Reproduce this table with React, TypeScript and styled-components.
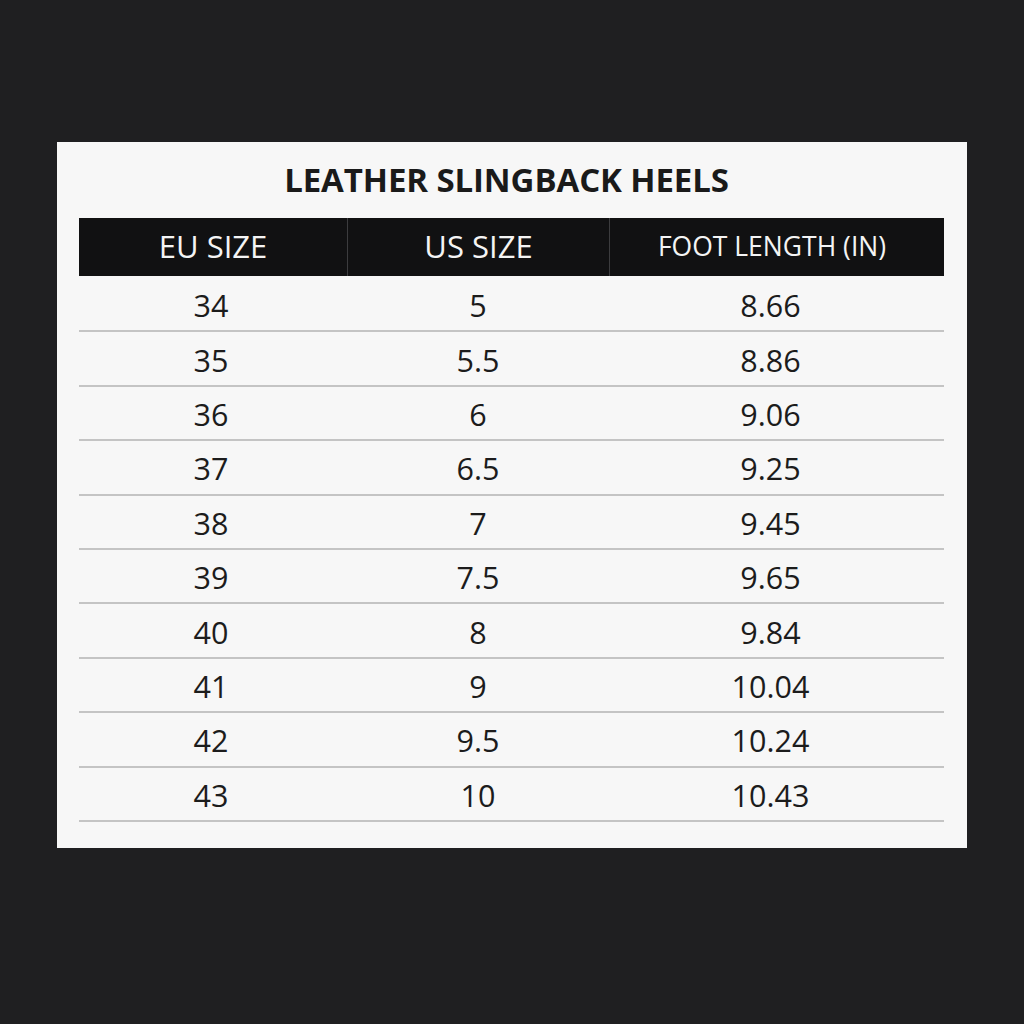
import styled, { createGlobalStyle } from "styled-components";

type SizeRow = {
  eu: string;
  us: string;
  foot: string;
};

const ROWS: SizeRow[] = [
  { eu: "34", us: "5", foot: "8.66" },
  { eu: "35", us: "5.5", foot: "8.86" },
  { eu: "36", us: "6", foot: "9.06" },
  { eu: "37", us: "6.5", foot: "9.25" },
  { eu: "38", us: "7", foot: "9.45" },
  { eu: "39", us: "7.5", foot: "9.65" },
  { eu: "40", us: "8", foot: "9.84" },
  { eu: "41", us: "9", foot: "10.04" },
  { eu: "42", us: "9.5", foot: "10.24" },
  { eu: "43", us: "10", foot: "10.43" },
];

const GRID_COLUMNS = "268px 262px 1fr";

const GlobalStyle = createGlobalStyle({
  "html, body": {
    margin: 0,
    padding: 0,
    background: "#1f1f21",
  },
  body: {
    fontFamily: '"Open Sans", "Liberation Sans", sans-serif',
  },
});

const Page = styled.div({
  minHeight: "1024px",
  padding: "142px 0 0 57px",
  boxSizing: "border-box",
});

const Card = styled.div({
  width: "910px",
  height: "706px",
  boxSizing: "border-box",
  padding: "0 23px 0 22px",
  background: "#f7f7f7",
});

const Title = styled.h1({
  margin: 0,
  height: "76px",
  lineHeight: "76px",
  textAlign: "center",
  fontSize: "33px",
  fontWeight: 700,
  color: "#1a1a1a",
  letterSpacing: "-0.1px",
  paddingRight: "10px",
});

const HeaderRow = styled.div({
  display: "grid",
  gridTemplateColumns: GRID_COLUMNS,
  height: "58px",
  background: "#111112",
});

type HeaderCellProps = {
  $small?: boolean;
  $divider?: boolean;
};

const HeaderCell = styled.div<HeaderCellProps>(({ $small, $divider }) => ({
  display: "flex",
  alignItems: "center",
  justifyContent: "center",
  color: "#f4f4f4",
  fontSize: $small ? "26.5px" : "31px",
  paddingBottom: "2px",
  paddingRight: $small ? "10px" : "0",
  borderLeft: $divider ? "1px solid #3c3c3e" : "none",
}));

const TableBody = styled.div({
  paddingTop: "2px",
});

const BodyRow = styled.div({
  display: "grid",
  gridTemplateColumns: GRID_COLUMNS,
  height: "54.4px",
  boxSizing: "border-box",
  borderBottom: "2px solid #c4c4c4",
});

type BodyCellProps = {
  $shift?: number;
};

const BodyCell = styled.div<BodyCellProps>(({ $shift = 0 }) => ({
  display: "flex",
  alignItems: "center",
  justifyContent: "center",
  fontSize: "30.5px",
  color: "#1c1c1c",
  paddingTop: "2px",
  paddingRight: `${$shift}px`,
}));

export default function App() {
  return (
    <>
      <GlobalStyle />
      <Page>
        <Card>
          <Title>LEATHER SLINGBACK HEELS</Title>
          <HeaderRow>
            <HeaderCell>EU SIZE</HeaderCell>
            <HeaderCell $divider>US SIZE</HeaderCell>
            <HeaderCell $divider $small>
              FOOT LENGTH (IN)
            </HeaderCell>
          </HeaderRow>
          <TableBody>
            {ROWS.map((row) => (
              <BodyRow key={row.eu}>
                <BodyCell $shift={4}>{row.eu}</BodyCell>
                <BodyCell>{row.us}</BodyCell>
                <BodyCell $shift={12}>{row.foot}</BodyCell>
              </BodyRow>
            ))}
          </TableBody>
        </Card>
      </Page>
    </>
  );
}
